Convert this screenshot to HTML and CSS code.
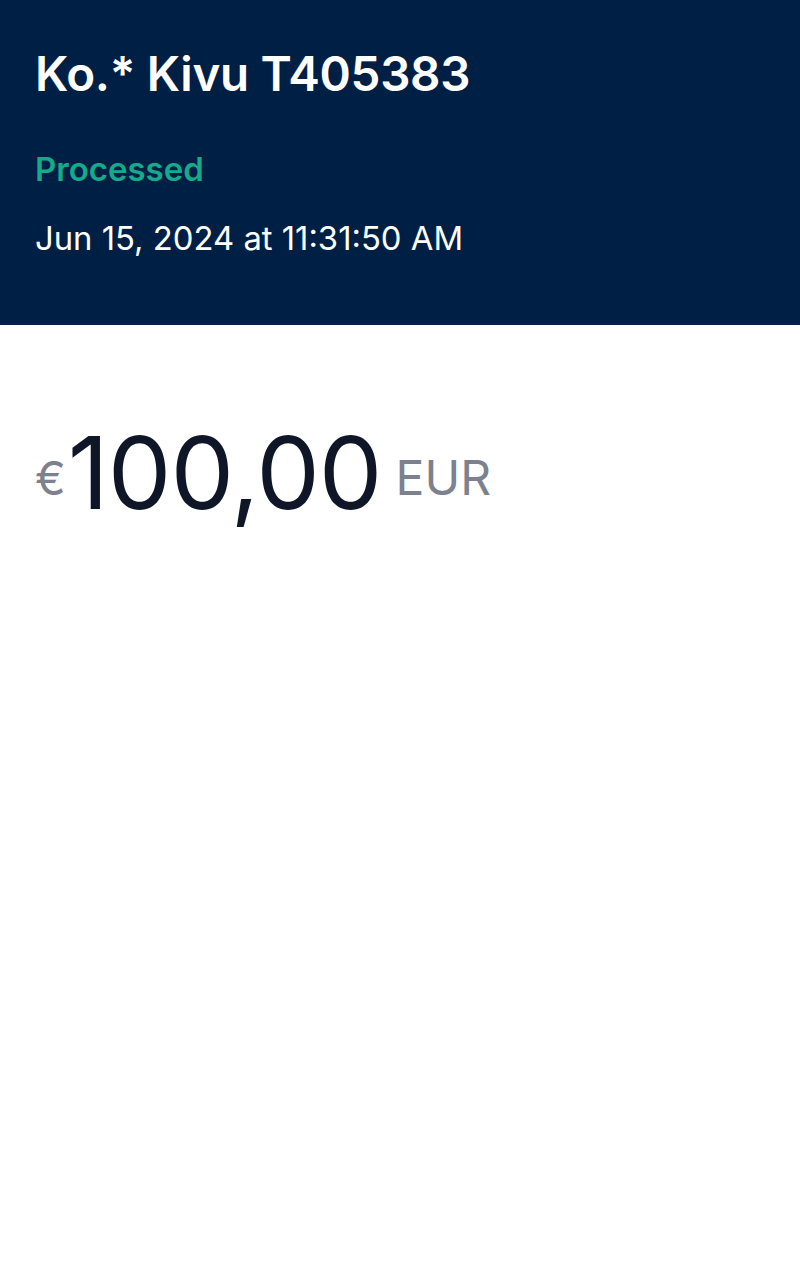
FILE: index.html
```html
<!DOCTYPE html>
<html lang="en">
<head>
<meta charset="utf-8">
<title>Transaction</title>
<link rel="stylesheet" href="styles.css">
</head>
<body>
<header class="header">
  <h1 class="title">Ko.* Kivu T405383</h1>
  <div class="status">Processed</div>
  <div class="date">Jun 15, 2024 at 11:31:50 AM</div>
</header>
<main class="content">
  <div class="amount"><span class="currency-symbol">€</span><span class="value">100,00</span><span class="code">EUR</span></div>
</main>
</body>
</html>
```
FILE: styles.css
```css
* { box-sizing: border-box; }
html, body { margin: 0; padding: 0; background: #ffffff; }
body { font-family: Inter, "Noto Sans", sans-serif; width: 800px; height: 1280px; }
.header {
  background: #001f45;
  height: 325px;
  padding: 46px 35px 0;
  display: flex;
  flex-direction: column;
}
.title {
  margin: 0;
  color: #ffffff;
  font-size: 47.5px;
  font-weight: 600;
  line-height: 56px;
  letter-spacing: -0.3px;
}
.status {
  margin-top: 47px;
  color: #16a98a;
  font-size: 33px;
  font-weight: 600;
  line-height: 40px;
}
.date {
  margin-top: 29px;
  color: #ffffff;
  font-size: 32.8px;
  font-weight: 400;
  line-height: 40px;
}
.content { padding: 87px 35px 0; }
.amount {
  color: #0e1627;
  white-space: nowrap;
  line-height: 120px;
}
.currency-symbol { font-size: 46px; color: #7c818d; margin-right: 2px; vertical-align: 14px; }
.value { font-size: 101px; font-weight: 400; letter-spacing: -1px; }
.code { font-size: 48px; color: #7c818d; margin-left: 14px; vertical-align: 14px; }
```
